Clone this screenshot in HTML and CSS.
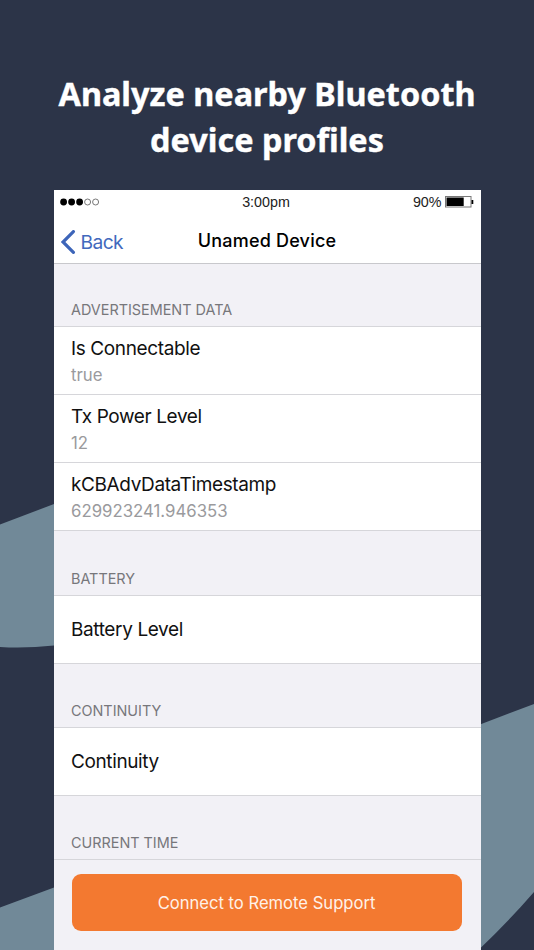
FILE: index.html
```html
<!DOCTYPE html>
<html lang="en">
  <head>
    <meta charset="utf-8" />
    <meta name="viewport" content="width=device-width, initial-scale=1" />
    <title>Unamed Device</title>
    <link rel="stylesheet" href="styles.css">
  </head>
  <body>
    <div class="promo">
      <svg class="backdrop" viewBox="0 0 534 950">
        <path d="M0 524.5L54 504L260 430V610Q150 638 54 645.5Q26 648.5 0 647Z" />
        <path d="M0 907.5L54 887.5L480 724.5L534 704V892Q508 922 480 948.5L478 950H0Z" />
      </svg>
      <h1 class="headline">Analyze nearby Bluetooth<br />device profiles</h1>

      <div class="phone">
        <div class="status-bar">
          <svg class="signal" width="40" height="8" viewBox="0 0 40 8">
            <circle class="on" cx="3.6" cy="4" r="3.4" />
            <circle class="on" cx="11.6" cy="4" r="3.4" />
            <circle class="on" cx="19.6" cy="4" r="3.4" />
            <circle class="off" cx="27.6" cy="4" r="3" />
            <circle class="off" cx="35.6" cy="4" r="3" />
          </svg>
          <span class="time">3:00pm</span>
          <div class="power">
            <span>90%</span>
            <svg width="29" height="12" viewBox="0 0 29 12">
              <rect class="shell" x=".5" y=".5" width="25.5" height="10.5" />
              <rect x="1.5" y="1.5" width="17.2" height="8.5" />
              <rect x="26.5" y="4" width="1.8" height="4" />
            </svg>
          </div>
        </div>

        <div class="nav-bar">
          <a class="back">
            <svg width="15" height="24" viewBox="0 0 15 24">
              <path d="M12.4 1.6L2 12L12.4 22.4" />
            </svg>
            <span>Back</span>
          </a>
          <div class="nav-title">Unamed Device</div>
        </div>

        <div class="list">
          <div class="section-title first">ADVERTISEMENT DATA</div>
          <div class="row">
            <div class="name">Is Connectable</div>
            <div class="value">true</div>
          </div>
          <div class="row">
            <div class="name">Tx Power Level</div>
            <div class="value">12</div>
          </div>
          <div class="row">
            <div class="name">kCBAdvDataTimestamp</div>
            <div class="value">629923241.946353</div>
          </div>
          <div class="section-title battery">BATTERY</div>
          <div class="row single">
            <div class="name">Battery Level</div>
          </div>
          <div class="section-title">CONTINUITY</div>
          <div class="row single">
            <div class="name">Continuity</div>
          </div>
          <div class="section-title">CURRENT TIME</div>
        </div>

        <div class="footer">
          <button class="connect">Connect to Remote Support</button>
        </div>
      </div>
    </div>
  </body>
</html>
```

FILE: styles.css
```css
html,
body {
  margin: 0;
  padding: 0;
}

* {
  box-sizing: border-box;
}

.promo {
  position: relative;
  width: 534px;
  height: 950px;
  overflow: hidden;
  background-color: #2c3448;
  font-family: Inter, sans-serif;
}

.backdrop {
  position: absolute;
  top: 0;
  left: 0;
  width: 534px;
  height: 950px;
  fill: #718998;
}

.headline {
  position: relative;
  margin: 0;
  height: 190px;
  padding-top: 70px;
  text-align: center;
  color: #fff;
  font-family: "Noto Sans", "Open Sans", sans-serif;
  font-size: 32.4px;
  font-weight: bold;
  line-height: 46px;
  -webkit-text-stroke: .4px #fff;
}

.phone {
  position: relative;
  display: flex;
  flex-direction: column;
  width: 427px;
  height: 760px;
  margin-left: 53.5px;
  background-color: #f2f1f6;
}

.status-bar {
  display: grid;
  grid-template-columns: 1fr auto 1fr;
  align-items: center;
  height: 24px;
  padding: 0 7px 0 6px;
  background-color: #fff;
  color: #222;
  font-family: "Liberation Sans", sans-serif;
  font-size: 14.3px;
}

.signal .off {
  fill: none;
  stroke: #555;
  stroke-width: .8;
}

.time {
  padding-right: 1px;
}

.power {
  display: flex;
  align-items: center;
  justify-content: flex-end;
  gap: 3px;
}
.power .shell {
  fill: none;
  stroke: #777;
}

.nav-bar {
  display: grid;
  grid-template-columns: 1fr auto 1fr;
  align-items: center;
  height: 50px;
  padding: 0 7px;
  background-color: #fff;
  border-bottom: 1px solid #c8c8cc;
}

.back {
  display: flex;
  align-items: center;
  gap: 5px;
  padding-top: 6px;
  color: #4269bd;
  font-size: 19.2px;
  letter-spacing: -.6px;
}
.back path {
  fill: none;
  stroke: #3d65b9;
  stroke-width: 3.2;
  stroke-linecap: round;
}

.nav-title {
  padding-top: 3px;
  color: #000;
  font-size: 18px;
  font-weight: 500;
  letter-spacing: .2px;
}

.section-title {
  height: 64px;
  padding: 37px 17.5px 0;
  border-bottom: 1px solid #d6d6da;
  color: #77777b;
  font-size: 14.4px;
  line-height: 20px;
}
.section-title.first {
  height: 63px;
  padding-top: 36px;
}
.section-title.battery {
  height: 65px;
  padding-top: 38px;
}

.row {
  height: 68px;
  padding: 9px 17.5px 0;
  background-color: #fff;
  border-bottom: 1px solid #d6d6da;
}
.row .name {
  color: #111;
  font-size: 19px;
  letter-spacing: -.38px;
  line-height: 26px;
}
.row .value {
  color: #9a9a9d;
  font-size: 16.8px;
  line-height: 26px;
}
.row.single {
  padding-top: 21px;
}

.footer {
  padding: 14px 18px;
}

.connect {
  display: block;
  width: 390px;
  height: 57px;
  padding: 0;
  border: 0;
  border-radius: 9px;
  background-color: #f37930;
  color: #fff2e9;
  font-family: inherit;
  font-size: 16.6px;
}
```
